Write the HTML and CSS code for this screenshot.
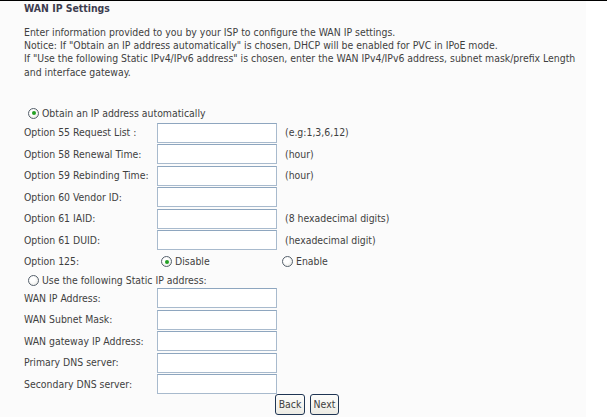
FILE: index.html
```html
<!DOCTYPE html>
<html lang="en">
<head>
  <meta charset="UTF-8">
  <title>WAN IP Settings</title>
  <link rel="stylesheet" href="styles.css">
</head>
<body>

  <div class="page">
    <div class="title">WAN IP Settings</div>

    <p class="intro">
      Enter information provided to you by your ISP to configure the WAN IP settings.<br>
      Notice: If "Obtain an IP address automatically" is chosen, DHCP will be enabled for PVC in IPoE mode.<br>
      If "Use the following Static IPv4/IPv6 address" is chosen, enter the WAN IPv4/IPv6 address, subnet mask/prefix Length and interface gateway.
    </p>

    <form class="wan-form">
      <label class="radio-line first">
        <input type="radio" name="ipmode" checked> Obtain an IP address automatically
      </label>

      <div class="row">
        <span class="lbl">Option 55 Request List :</span>
        <input type="text" class="box">
        <span class="hint">(e.g:1,3,6,12)</span>
      </div>
      <div class="row">
        <span class="lbl">Option 58 Renewal Time:</span>
        <input type="text" class="box">
        <span class="hint">(hour)</span>
      </div>
      <div class="row">
        <span class="lbl">Option 59 Rebinding Time:</span>
        <input type="text" class="box">
        <span class="hint">(hour)</span>
      </div>
      <div class="row">
        <span class="lbl">Option 60 Vendor ID:</span>
        <input type="text" class="box">
        <span class="hint"></span>
      </div>
      <div class="row">
        <span class="lbl">Option 61 IAID:</span>
        <input type="text" class="box">
        <span class="hint">(8 hexadecimal digits)</span>
      </div>
      <div class="row">
        <span class="lbl">Option 61 DUID:</span>
        <input type="text" class="box">
        <span class="hint">(hexadecimal digit)</span>
      </div>
      <div class="row">
        <span class="lbl">Option 125:</span>
        <label class="opt"><input type="radio" name="opt125" checked> Disable</label>
        <label class="opt enable"><input type="radio" name="opt125"> Enable</label>
      </div>

      <label class="radio-line static">
        <input type="radio" name="ipmode"> Use the following Static IP address:
      </label>

      <div class="row">
        <span class="lbl">WAN IP Address:</span>
        <input type="text" class="box">
      </div>
      <div class="row">
        <span class="lbl">WAN Subnet Mask:</span>
        <input type="text" class="box">
      </div>
      <div class="row">
        <span class="lbl">WAN gateway IP Address:</span>
        <input type="text" class="box">
      </div>
      <div class="row">
        <span class="lbl">Primary DNS server:</span>
        <input type="text" class="box">
      </div>
      <div class="row">
        <span class="lbl">Secondary DNS server:</span>
        <input type="text" class="box">
      </div>

      <div class="buttons">
        <button type="button" class="btn back">Back</button>
        <button type="button" class="btn next">Next</button>
      </div>
    </form>
  </div>

</body>
</html>
```
FILE: styles.css
```css
body {
  margin: 0;
  background: #fff;
  border-top: 1px solid #000;
  font-family: "DejaVu Sans Condensed", "DejaVu Sans", sans-serif;
  font-size: 10.4px;
  line-height: 13.4px;
  color: #3f3f3f;
}

.page {
  width: 562px;
  height: 416px;
  padding-left: 24px;
  background: #fbfbfb;
  overflow: hidden;
}

.title {
  font-weight: bold;
  color: #3d3d4f;
  line-height: 13px;
  padding-top: 1px;
}

.intro {
  width: 570px;
  margin: 10.6px 0 0;
}

.wan-form {
  margin-top: 25px;
}

/* radio lines */
.radio-line {
  display: flex;
  align-items: center;
  padding-left: 4px;
}

.radio-line.first {
  height: 18px;
}

.radio-line.static {
  height: 15px;
}

input[type="radio"] {
  appearance: none;
  -webkit-appearance: none;
  width: 11px;
  height: 11px;
  margin: 0 3px 0 0;
  border: 1px solid #55606c;
  border-radius: 50%;
  background: radial-gradient(circle at 40% 40%, #fff 30%, #e2e2dc 100%);
  box-sizing: border-box;
  position: relative;
  flex: none;
}

input[type="radio"]:checked::after {
  content: "";
  position: absolute;
  left: 2.5px;
  top: 2.5px;
  width: 4px;
  height: 4px;
  border-radius: 50%;
  background: #23a023;
}

/* form rows */
.row {
  display: grid;
  grid-template-columns: 133px 120px auto;
  align-items: center;
  height: 21.5px;
}

.box {
  width: 120px;
  height: 20px;
  margin: 0;
  padding: 0 2px;
  box-sizing: border-box;
  border: 1px solid #a8bacd;
  border-top-color: #8ea6bf;
  background: #fff;
  font: inherit;
}

.hint {
  padding-left: 8px;
}

.opt {
  display: flex;
  align-items: center;
  padding-left: 4px;
}

.opt.enable {
  padding-left: 5px;
}

/* buttons */
.buttons {
  display: flex;
  gap: 5px;
  padding-left: 251px;
  margin-top: -1px;
}

.btn {
  height: 21px;
  padding: 0;
  border: 1px solid #1f3553;
  border-radius: 3px;
  background: linear-gradient(#fdfdfb, #ecebe4);
  font: inherit;
  color: #404040;
  cursor: pointer;
}

.btn.back {
  width: 30px;
}

.btn.next {
  width: 29px;
}
```
